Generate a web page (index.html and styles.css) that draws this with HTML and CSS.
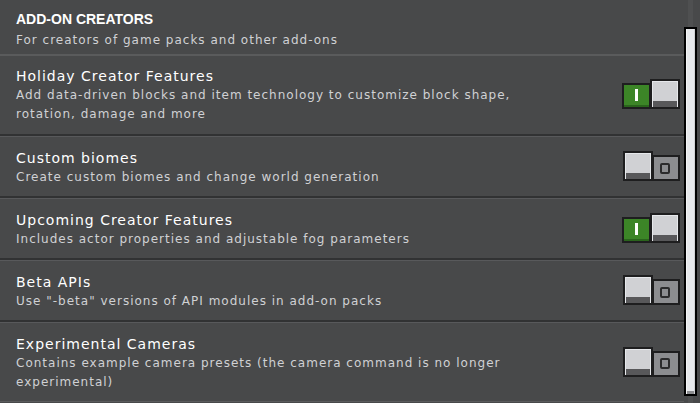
FILE: index.html
```html
<!DOCTYPE html>
<html>
<head>
<meta charset="utf-8">
<link rel="stylesheet" href="styles.css">
</head>
<body>
<div class="screen">
  <div class="list">
    <header class="section-head">
      <h1 class="section-title">ADD-ON CREATORS</h1>
      <p class="section-sub">For creators of game packs and other add-ons</p>
    </header>

    <div class="row">
      <div class="text">
        <div class="title">Holiday Creator Features</div>
        <div class="desc">Add data-driven blocks and item technology to customize block shape, rotation, damage and more</div>
      </div>
      <div class="toggle on"><div class="track"><span class="bar"></span></div><div class="knob"></div></div>
    </div>

    <div class="row">
      <div class="text">
        <div class="title">Custom biomes</div>
        <div class="desc">Create custom biomes and change world generation</div>
      </div>
      <div class="toggle off"><div class="knob"></div><div class="track"><span class="ring"></span></div></div>
    </div>

    <div class="row">
      <div class="text">
        <div class="title">Upcoming Creator Features</div>
        <div class="desc">Includes actor properties and adjustable fog parameters</div>
      </div>
      <div class="toggle on"><div class="track"><span class="bar"></span></div><div class="knob"></div></div>
    </div>

    <div class="row">
      <div class="text">
        <div class="title">Beta APIs</div>
        <div class="desc">Use "-beta" versions of API modules in add-on packs</div>
      </div>
      <div class="toggle off"><div class="knob"></div><div class="track"><span class="ring"></span></div></div>
    </div>

    <div class="row last">
      <div class="text">
        <div class="title">Experimental Cameras</div>
        <div class="desc">Contains example camera presets (the camera command is no longer experimental)</div>
      </div>
      <div class="toggle off"><div class="knob"></div><div class="track"><span class="ring"></span></div></div>
    </div>
  </div>
  <div class="scroll">
    <div class="thumb"></div>
  </div>
</div>
</body>
</html>
```

FILE: styles.css
```css
* { box-sizing: border-box; }
html, body { margin: 0; padding: 0; }
body {
  background: #48494a;
  font-family: "DejaVu Sans", "Noto Sans", sans-serif;
  width: 700px;
  height: 403px;
  overflow: hidden;
}
.screen {
  display: flex;
  width: 700px;
  height: 403px;
  overflow: hidden;
  background: #48494a;
}
.list {
  flex: 1;
  display: flex;
  flex-direction: column;
  min-width: 0;
}
.section-head {
  padding: 9px 16px 4px;
  border-bottom: 2px solid #5a5b5c;
}
.section-title {
  margin: 0;
  font-family: "Liberation Sans", Arial, sans-serif;
  font-weight: bold;
  font-size: 14px;
  line-height: 20px;
  color: #ffffff;
  letter-spacing: 0px;
}
.section-sub {
  margin: 2px 0 0;
  font-size: 12px;
  line-height: 19px;
  color: #d0d1d4;
  letter-spacing: 1px;
}
.row {
  display: flex;
  align-items: center;
  padding: 12px 4px 9px 16px;
  border-top: 2px solid #313233;
  box-shadow: inset 0 1px 0 #58595b;
}
.section-head + .row {
  border-top: 0;
  box-shadow: none;
  padding-top: 10px;
  padding-bottom: 10px;
}
.row.last {
  border-bottom: 1px solid #5a5b5c;
}
.text {
  flex: 1;
  min-width: 0;
}
.title {
  font-size: 14px;
  line-height: 20px;
  color: #ffffff;
  letter-spacing: 1px;
}
.desc {
  max-width: 522px;
  font-size: 12px;
  line-height: 19px;
  color: #d0d1d4;
  letter-spacing: 1px;
}
.toggle {
  display: flex;
  align-items: flex-end;
  height: 30px;
  margin-bottom: 3px;
  flex: none;
}
.toggle .track {
  height: 26px;
  border: 2px solid #1e1e1f;
  display: flex;
  align-items: center;
  justify-content: center;
}
.toggle.on .track {
  width: 29px;
  margin-right: -1px;
  background: #3c8527;
  box-shadow: inset 0 -2px 0 #2a641c;
}
.toggle.off .track {
  width: 28px;
  margin-left: -1px;
  background: #8c8d90;
}
.knob {
  width: 30px;
  height: 30px;
  border: 2px solid #1e1e1f;
  background: linear-gradient(to bottom, #d0d1d4 0, #d0d1d4 20px, #58585a 20px);
  box-shadow: inset 1px 1px 0 #e6e8eb, inset -1px 0 0 #e6e8eb;
  position: relative;
  z-index: 1;
}
.bar {
  display: block;
  width: 3px;
  height: 12px;
  background: #ffffff;
  margin-bottom: 2px;
}
.ring {
  display: block;
  width: 10px;
  height: 11px;
  border: 2px solid #2b2b2c;
  border-radius: 2px;
  margin-right: 3px;
}
.scroll {
  width: 16px;
  flex: none;
  position: relative;
  background: linear-gradient(to right, transparent 4px, #4f5051 4px, #4f5051 9px, transparent 9px);
}
.thumb {
  margin-top: 27px;
  width: 13px;
  height: 369px;
  border: 2px solid #000000;
  background: #e6e8eb;
  box-shadow: inset 1px 0 0 #f4f5f6, inset -1px 0 0 #cfd0d3, inset 0 -3px 0 #8c8d90;
}
```
